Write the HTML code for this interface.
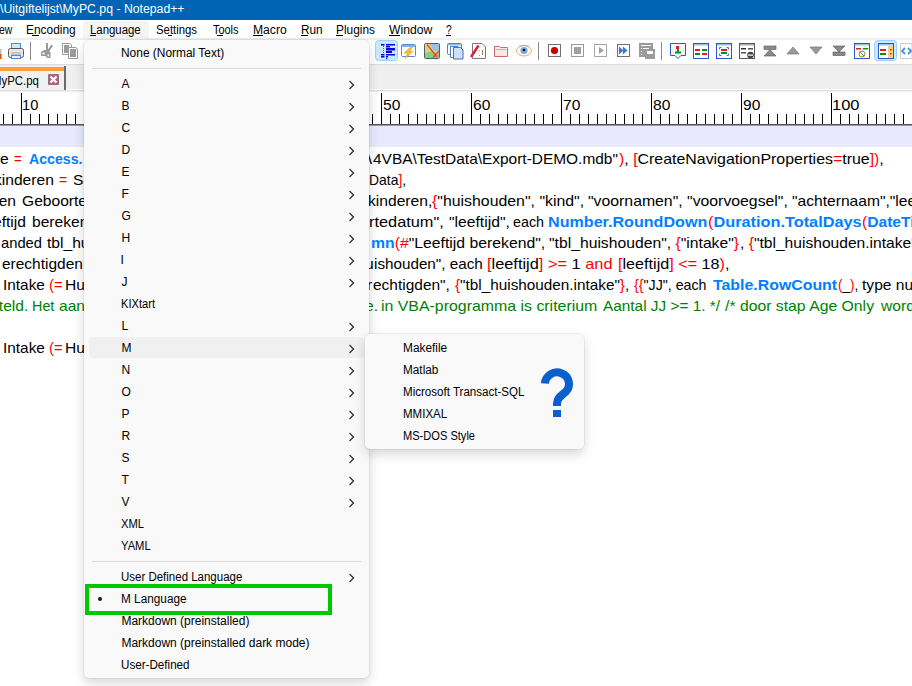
<!DOCTYPE html>
<html><head><meta charset="utf-8"><style>
html,body{margin:0;padding:0;}
body{width:912px;height:686px;overflow:hidden;position:relative;background:#fff;font-family:"Liberation Sans",sans-serif;}
.t{position:absolute;white-space:pre;line-height:1;transform-origin:0 0;font-family:"Liberation Sans",sans-serif;}
.a{position:absolute;}
.tick{position:absolute;width:1px;background:#000;}
</style></head><body>
<!-- title bar -->
<div class="a" style="left:0;top:0;width:912px;height:20px;background:#0064b4"></div>
<!-- menubar -->
<div class="a" style="left:0;top:20px;width:912px;height:18px;background:#fff"></div>
<div class="a" style="left:83px;top:21px;width:66px;height:17px;background:#f5f5f5"></div>
<div class="a" style="left:0;top:38px;width:912px;height:2px;background:#efefef"></div>
<!--UL--><div class="a" style="left:32px;top:35px;width:7px;height:1px;background:#000"></div><div class="a" style="left:90px;top:35px;width:6px;height:1px;background:#000"></div><div class="a" style="left:168px;top:35px;width:4px;height:1px;background:#000"></div><div class="a" style="left:217px;top:35px;width:6px;height:1px;background:#000"></div><div class="a" style="left:253px;top:35px;width:10px;height:1px;background:#000"></div><div class="a" style="left:301px;top:35px;width:7px;height:1px;background:#000"></div><div class="a" style="left:336px;top:35px;width:7px;height:1px;background:#000"></div><div class="a" style="left:389px;top:35px;width:11px;height:1px;background:#000"></div><div class="a" style="left:446px;top:35px;width:5px;height:1px;background:#000"></div>
<!-- toolbar -->
<div class="a" style="left:0;top:40px;width:912px;height:24px;background:#fff"></div>
<div class="a" style="left:0;top:64px;width:912px;height:1px;background:#dcdcdc"></div>
<svg class="a" style="left:0;top:0" width="912" height="64" viewBox="0 0 912 64">
<!-- partial icon at left edge -->
<rect x="0" y="49" width="1.5" height="5" fill="#bbb"/><rect x="0" y="54" width="1.5" height="5" fill="#d84a10"/>
<!-- printer -->
<rect x="11.5" y="43.5" width="9" height="8" fill="#d6e8fb" stroke="#4a8ad8" stroke-width="1"/>
<rect x="8.5" y="48.5" width="15" height="9" rx="2" fill="#e8e8e8" stroke="#555" stroke-width="1"/>
<rect x="11" y="52" width="10" height="3" fill="#c8c8c8"/>
<rect x="11.5" y="55.5" width="9" height="3" fill="#e9f3fb" stroke="#4a8ad8" stroke-width="1"/>
<!-- separator -->
<rect x="30" y="42" width="1" height="18" fill="#8a8a8a"/>
<!-- scissors -->
<g fill="#9a9a9a">
<rect x="46" y="43" width="2" height="9"/>
<path d="M51.5 44.5L53 46L48 53L46.5 51.5Z"/>
<path d="M41 52L44 50H48.5L50.5 52.5V58H47L45.5 56H41Z"/>
</g>
<rect x="42.5" y="52.5" width="2" height="2" fill="#fff"/>
<rect x="47.5" y="54.5" width="1.5" height="2" fill="#fff"/>
<!-- copy -->
<path d="M62.5 43.5H70L71.5 45V54.5H62.5Z" fill="#fff" stroke="#9a9a9a"/>
<rect x="64" y="45" width="5" height="8" fill="#9a9a9a"/>
<path d="M68.5 47.5H76L77.5 49V58.5H68.5Z" fill="#fff" stroke="#9a9a9a"/>
<rect x="70" y="49" width="6" height="8" fill="#9a9a9a"/>

<!-- highlighted button 1 -->
<rect x="375.5" y="40.5" width="22" height="20" rx="3" fill="#cce8ff" stroke="#99d1ff"/>
<g fill="#0000e0">
<rect x="381" y="44" width="3.5" height="1.5"/><rect x="386" y="44" width="9" height="1.5"/>
<rect x="386" y="46" width="4" height="1.5"/>
<rect x="386" y="48" width="9" height="2.5"/>
<rect x="386" y="51" width="6" height="2"/>
<rect x="381" y="54" width="3.5" height="1.5"/><rect x="386" y="54" width="9" height="1.5"/>
<rect x="381" y="56" width="3.5" height="1.5"/><rect x="386" y="56" width="2" height="1.5"/>
<rect x="386" y="58" width="1.2" height="1.2"/>
</g>
<g fill="#ff2020"><rect x="383" y="46" width="1" height="1"/><rect x="383" y="48" width="1" height="1"/><rect x="383" y="50" width="1" height="1"/><rect x="383" y="52" width="1" height="1"/></g>
<!-- lightning window -->
<rect x="401.5" y="44.5" width="14" height="12" rx="1" fill="#fff" stroke="#5a88cc"/>
<rect x="402" y="45" width="13" height="2" fill="#8ab0e0"/>
<path d="M410 47.5L404 53H407.5L405 58.5L413 51.5H409.5L412.5 47.5Z" fill="#f0c040" stroke="#d8a020" stroke-width="0.6"/>
<!-- map -->
<rect x="424.5" y="43.5" width="15" height="15" rx="1" fill="#dcd870" stroke="#5a5a78"/>
<path d="M430 44H439V52L433 50Z" fill="#98c0e8"/>
<path d="M425 53L432 51L439 54V58H425Z" fill="#80d080"/>
<path d="M427 44.5L437 57M433 57.5L439 51" stroke="#f04040" stroke-width="1.3"/>
<!-- docs -->
<rect x="447.5" y="43.5" width="14" height="11" rx="1" fill="#fff" stroke="#4a80d8"/>
<rect x="448" y="44" width="13" height="1.5" fill="#90b8ec"/>
<path d="M450.5 46.5H458L460 48.5V57.5H450.5Z" fill="#fff" stroke="#4a80d8"/>
<path d="M453.5 47.5H460.5L463 50V59H453.5Z" fill="#cfe0f8" stroke="#3a70d0"/>
<!-- function doc -->
<path d="M472.5 43.5H482L485.5 47V58.5H472.5Z" fill="#fffdf5" stroke="#7a7a7a"/>
<path d="M471 57L478.5 45.5" stroke="#e02030" stroke-width="2.5"/>
<rect x="479" y="50" width="1" height="1" fill="#7c7"/><rect x="479" y="55" width="1" height="1" fill="#7c7"/><rect x="482" y="50" width="1" height="5" fill="#888"/>
<!-- folder -->
<path d="M494.5 46.5H499.5L500.5 47.5H507.5V56.5H494.5Z" fill="#fbe8e8" stroke="#d06868"/>
<rect x="496" y="49" width="10" height="1" fill="#e8a0a0"/>
<!-- eye -->
<ellipse cx="524" cy="50.8" rx="7.5" ry="5.2" fill="#fffaf0" stroke="#e8a060" stroke-width="0.9"/>
<circle cx="524" cy="50.5" r="3.6" fill="#7aa8e0"/>
<circle cx="524" cy="50" r="1.3" fill="#111"/>
<path d="M519 46.5Q524 44 529 46.5" stroke="#aaa" fill="none"/>
<!-- separator -->
<rect x="538" y="42" width="1" height="18" fill="#8a8a8a"/>
<!-- record -->
<rect x="548.5" y="44.5" width="12" height="12" fill="#fff" stroke="#707070"/>
<circle cx="554.5" cy="50.5" r="3.6" fill="#cc0000"/>
<!-- stop -->
<rect x="571.5" y="44.5" width="12" height="12" fill="#fff" stroke="#9a9a9a"/>
<rect x="574" y="47" width="7" height="7" fill="#a0a0a0"/>
<!-- play -->
<rect x="594.5" y="44.5" width="12" height="12" fill="#fff" stroke="#a6a6a6"/>
<path d="M599 47L604 50.5L599 54Z" fill="#a0a0a0"/>
<!-- ff -->
<rect x="617.5" y="44.5" width="12" height="12" fill="#fff" stroke="#707070"/>
<path d="M619 46.5L623.5 50.5L619 54.5ZM623 46.5L627.5 50.5L623 54.5Z" fill="#3a78e0"/>
<!-- save macro -->
<rect x="639" y="43" width="14" height="14" fill="#9a9a9a"/>
<rect x="645" y="49" width="10" height="10" fill="#9a9a9a"/>
<g fill="#fff"><rect x="641" y="45" width="10" height="1"/><rect x="641" y="48" width="1" height="1"/><rect x="643" y="48" width="6" height="1"/><rect x="641" y="51" width="1" height="1"/><rect x="641" y="54" width="1" height="1"/><rect x="647" y="51" width="6" height="3"/></g>
<!-- separator -->
<rect x="661" y="42" width="1" height="18" fill="#8a8a8a"/>
<!-- bubble -->
<path d="M670.5 43.5H685.5V55.5H681L678 58.5L675 55.5H670.5Z" fill="#f4f6fb" stroke="#2a58c8"/>
<rect x="676" y="46" width="3" height="3" fill="#e02020"/><rect x="677" y="49" width="2" height="3" fill="#109010"/><rect x="675" y="51.5" width="6" height="2" fill="#109010"/>
<!-- dash box -->
<rect x="693.5" y="43.5" width="15" height="15" fill="#fff" stroke="#2a58c8"/>
<rect x="694" y="44" width="14" height="1.5" fill="#9cc0f0"/>
<rect x="695" y="49" width="5" height="2" fill="#e02020"/><rect x="702" y="49" width="5" height="2" fill="#109010"/>
<rect x="695" y="53" width="5" height="2" fill="#109010"/><rect x="702" y="53" width="5" height="2" fill="#e02020"/>
<!-- bracket box -->
<rect x="716.5" y="43.5" width="15" height="15" fill="#fff" stroke="#2a58c8"/>
<rect x="717" y="44" width="14" height="1.5" fill="#9cc0f0"/>
<rect x="721" y="49" width="6" height="2" fill="#e02020"/><rect x="721" y="52" width="6" height="2" fill="#109010"/>
<path d="M719.5 49.5V47.5H721.5M726.5 47.5H728.5V49.5M719.5 53.5V55.5H721.5M726.5 55.5H728.5V53.5" stroke="#6a6aa0" fill="none"/>
<!-- gray box -->
<rect x="739.5" y="43.5" width="15" height="15" fill="#fff" stroke="#555"/>
<rect x="740" y="44" width="14" height="1.5" fill="#aaa"/>
<rect x="741" y="48" width="5" height="1.5" fill="#333"/><rect x="748" y="48" width="5" height="1.5" fill="#555"/>
<rect x="741" y="52" width="5" height="1.5" fill="#555"/>
<circle cx="750.5" cy="55" r="3.3" fill="#444"/><rect x="748" y="54.5" width="5" height="1.2" fill="#fff"/>
<!-- hourglass top -->
<rect x="764" y="46" width="12" height="3.5" fill="#8a8a8a" stroke="#555" stroke-width="0.6"/>
<path d="M770 49.5L764 56H776Z" fill="#8a8a8a" stroke="#555" stroke-width="0.6"/>
<!-- up tri -->
<path d="M793 47L787 54H799Z" fill="#9a9a9a" stroke="#666" stroke-width="0.6"/>
<!-- down tri -->
<path d="M810 47H822L816 54Z" fill="#9a9a9a" stroke="#666" stroke-width="0.6"/>
<!-- hourglass bottom -->
<path d="M833 46H845L839 52Z" fill="#8a8a8a" stroke="#555" stroke-width="0.6"/>
<rect x="833" y="52" width="12" height="3.5" fill="#8a8a8a" stroke="#555" stroke-width="0.6"/>
<!-- blue box no -->
<rect x="854.5" y="43.5" width="15" height="15" fill="#fff" stroke="#2a58c8"/>
<rect x="855" y="44" width="14" height="1.5" fill="#9cc0f0"/>
<rect x="856" y="48" width="5" height="1.5" fill="#e02020"/><rect x="863" y="48" width="5" height="1.5" fill="#109010"/>
<circle cx="862" cy="54" r="3" fill="none" stroke="#8a8a40" stroke-width="1"/><path d="M860 52L864 56" stroke="#8a8a40"/>
<!-- highlighted button 2 -->
<rect x="874.5" y="40.5" width="22" height="20" rx="3" fill="#cce8ff" stroke="#99d1ff"/>
<rect x="878.5" y="43.5" width="15" height="15" fill="#fff" stroke="#2a58c8"/>
<rect x="879" y="44" width="14" height="1.5" fill="#9cc0f0"/>
<rect x="888" y="46" width="5" height="12" fill="#f8d080"/>
<rect x="880" y="49" width="6" height="2" fill="#e02020"/><rect x="880" y="53" width="6" height="2" fill="#109010"/>
<rect x="890" y="49" width="1.5" height="1.5" fill="#e02020"/><rect x="890" y="53" width="1.5" height="1.5" fill="#e02020"/>
<!-- partial <> -->
<path d="M900.5 43.5H912V58.5H900.5Z" fill="#fff" stroke="#ccc"/>
<path d="M905 48L902 51L905 54M908 48L911 51L908 54" stroke="#4a90e0" stroke-width="1.8" fill="none"/>
</svg>

<!-- tab bar -->
<div class="a" style="left:0;top:65px;width:912px;height:24px;background:#efefef"></div>
<div class="a" style="left:0;top:89px;width:912px;height:1px;background:#fff"></div>
<div class="a" style="left:0;top:90px;width:912px;height:1px;background:#e0e0e0"></div>
<div class="a" style="left:0;top:91px;width:912px;height:1px;background:#efefef"></div>
<div class="a" style="left:0;top:67px;width:64px;height:4px;background:#f8a033"></div>
<div class="a" style="left:0;top:71px;width:64px;height:19px;background:#f0f0f0"></div>
<div class="a" style="left:64px;top:66px;width:2px;height:24px;background:#6b6b6b"></div>
<div class="a" style="left:48px;top:74px;width:11px;height:11px;background:#aa6680;border-radius:1px"></div>
<svg class="a" style="left:48px;top:74px" width="11" height="11"><path d="M2.5 2.5L8.5 8.5M8.5 2.5L2.5 8.5" stroke="#fff" stroke-width="2.3"/></svg>
<!-- ruler -->
<div class="a" style="left:0;top:92px;width:912px;height:32px;background:#fff"></div>
<div class="a" style="left:0;top:124px;width:912px;height:1px;background:#555"></div>
<div class="a" style="left:0;top:125px;width:912px;height:1px;background:#999"></div>
<div class="tick" style="left:3px;top:114px;height:10px"></div>
<div class="tick" style="left:12px;top:114px;height:10px"></div>
<div class="tick" style="left:21px;top:93px;height:31px"></div>
<div class="tick" style="left:30px;top:114px;height:10px"></div>
<div class="tick" style="left:39px;top:114px;height:10px"></div>
<div class="tick" style="left:48px;top:114px;height:10px"></div>
<div class="tick" style="left:57px;top:114px;height:10px"></div>
<div class="tick" style="left:66px;top:114px;height:10px"></div>
<div class="tick" style="left:75px;top:114px;height:10px"></div>
<div class="tick" style="left:84px;top:114px;height:10px"></div>
<div class="tick" style="left:93px;top:114px;height:10px"></div>
<div class="tick" style="left:102px;top:114px;height:10px"></div>
<div class="tick" style="left:111px;top:93px;height:31px"></div>
<div class="tick" style="left:120px;top:114px;height:10px"></div>
<div class="tick" style="left:129px;top:114px;height:10px"></div>
<div class="tick" style="left:138px;top:114px;height:10px"></div>
<div class="tick" style="left:147px;top:114px;height:10px"></div>
<div class="tick" style="left:156px;top:114px;height:10px"></div>
<div class="tick" style="left:165px;top:114px;height:10px"></div>
<div class="tick" style="left:174px;top:114px;height:10px"></div>
<div class="tick" style="left:183px;top:114px;height:10px"></div>
<div class="tick" style="left:192px;top:114px;height:10px"></div>
<div class="tick" style="left:201px;top:93px;height:31px"></div>
<div class="tick" style="left:210px;top:114px;height:10px"></div>
<div class="tick" style="left:219px;top:114px;height:10px"></div>
<div class="tick" style="left:228px;top:114px;height:10px"></div>
<div class="tick" style="left:237px;top:114px;height:10px"></div>
<div class="tick" style="left:246px;top:114px;height:10px"></div>
<div class="tick" style="left:255px;top:114px;height:10px"></div>
<div class="tick" style="left:264px;top:114px;height:10px"></div>
<div class="tick" style="left:273px;top:114px;height:10px"></div>
<div class="tick" style="left:282px;top:114px;height:10px"></div>
<div class="tick" style="left:291px;top:93px;height:31px"></div>
<div class="tick" style="left:300px;top:114px;height:10px"></div>
<div class="tick" style="left:309px;top:114px;height:10px"></div>
<div class="tick" style="left:318px;top:114px;height:10px"></div>
<div class="tick" style="left:327px;top:114px;height:10px"></div>
<div class="tick" style="left:336px;top:114px;height:10px"></div>
<div class="tick" style="left:345px;top:114px;height:10px"></div>
<div class="tick" style="left:354px;top:114px;height:10px"></div>
<div class="tick" style="left:363px;top:114px;height:10px"></div>
<div class="tick" style="left:372px;top:114px;height:10px"></div>
<div class="tick" style="left:381px;top:93px;height:31px"></div>
<div class="tick" style="left:390px;top:114px;height:10px"></div>
<div class="tick" style="left:399px;top:114px;height:10px"></div>
<div class="tick" style="left:408px;top:114px;height:10px"></div>
<div class="tick" style="left:417px;top:114px;height:10px"></div>
<div class="tick" style="left:426px;top:114px;height:10px"></div>
<div class="tick" style="left:435px;top:114px;height:10px"></div>
<div class="tick" style="left:444px;top:114px;height:10px"></div>
<div class="tick" style="left:453px;top:114px;height:10px"></div>
<div class="tick" style="left:462px;top:114px;height:10px"></div>
<div class="tick" style="left:471px;top:93px;height:31px"></div>
<div class="tick" style="left:480px;top:114px;height:10px"></div>
<div class="tick" style="left:489px;top:114px;height:10px"></div>
<div class="tick" style="left:498px;top:114px;height:10px"></div>
<div class="tick" style="left:507px;top:114px;height:10px"></div>
<div class="tick" style="left:516px;top:114px;height:10px"></div>
<div class="tick" style="left:525px;top:114px;height:10px"></div>
<div class="tick" style="left:534px;top:114px;height:10px"></div>
<div class="tick" style="left:543px;top:114px;height:10px"></div>
<div class="tick" style="left:552px;top:114px;height:10px"></div>
<div class="tick" style="left:561px;top:93px;height:31px"></div>
<div class="tick" style="left:570px;top:114px;height:10px"></div>
<div class="tick" style="left:579px;top:114px;height:10px"></div>
<div class="tick" style="left:588px;top:114px;height:10px"></div>
<div class="tick" style="left:597px;top:114px;height:10px"></div>
<div class="tick" style="left:606px;top:114px;height:10px"></div>
<div class="tick" style="left:615px;top:114px;height:10px"></div>
<div class="tick" style="left:624px;top:114px;height:10px"></div>
<div class="tick" style="left:633px;top:114px;height:10px"></div>
<div class="tick" style="left:642px;top:114px;height:10px"></div>
<div class="tick" style="left:651px;top:93px;height:31px"></div>
<div class="tick" style="left:660px;top:114px;height:10px"></div>
<div class="tick" style="left:669px;top:114px;height:10px"></div>
<div class="tick" style="left:678px;top:114px;height:10px"></div>
<div class="tick" style="left:687px;top:114px;height:10px"></div>
<div class="tick" style="left:696px;top:114px;height:10px"></div>
<div class="tick" style="left:705px;top:114px;height:10px"></div>
<div class="tick" style="left:714px;top:114px;height:10px"></div>
<div class="tick" style="left:723px;top:114px;height:10px"></div>
<div class="tick" style="left:732px;top:114px;height:10px"></div>
<div class="tick" style="left:741px;top:93px;height:31px"></div>
<div class="tick" style="left:750px;top:114px;height:10px"></div>
<div class="tick" style="left:759px;top:114px;height:10px"></div>
<div class="tick" style="left:768px;top:114px;height:10px"></div>
<div class="tick" style="left:777px;top:114px;height:10px"></div>
<div class="tick" style="left:786px;top:114px;height:10px"></div>
<div class="tick" style="left:795px;top:114px;height:10px"></div>
<div class="tick" style="left:804px;top:114px;height:10px"></div>
<div class="tick" style="left:813px;top:114px;height:10px"></div>
<div class="tick" style="left:822px;top:114px;height:10px"></div>
<div class="tick" style="left:831px;top:93px;height:31px"></div>
<div class="tick" style="left:840px;top:114px;height:10px"></div>
<div class="tick" style="left:849px;top:114px;height:10px"></div>
<div class="tick" style="left:858px;top:114px;height:10px"></div>
<div class="tick" style="left:867px;top:114px;height:10px"></div>
<div class="tick" style="left:876px;top:114px;height:10px"></div>
<div class="tick" style="left:885px;top:114px;height:10px"></div>
<div class="tick" style="left:894px;top:114px;height:10px"></div>
<div class="tick" style="left:903px;top:114px;height:10px"></div>
<div class="tick" style="left:912px;top:114px;height:10px"></div>
<!-- editor -->
<div class="a" style="left:0;top:126px;width:912px;height:21px;background:#e8e8ff"></div>
<div class="t" style="left:-0.50px;top:3px;font-size:12px;transform:scaleX(1.0208);"><span style="color:#fff;font-weight:400">\Uitgiftelijst\MyPC.pq - Notepad++</span></div>
<div class="t" style="left:-1.00px;top:24px;font-size:12px;transform:scaleX(0.8613);">ew</div>
<div class="t" style="left:26.00px;top:24px;font-size:12px;transform:scaleX(0.9926);">Encoding</div>
<div class="t" style="left:90.00px;top:24px;font-size:12px;transform:scaleX(0.9494);">Language</div>
<div class="t" style="left:156.00px;top:24px;font-size:12px;transform:scaleX(0.9456);">Settings</div>
<div class="t" style="left:213.00px;top:24px;font-size:12px;transform:scaleX(0.9103);">Tools</div>
<div class="t" style="left:253.00px;top:24px;font-size:12px;transform:scaleX(1.0099);">Macro</div>
<div class="t" style="left:301.00px;top:24px;font-size:12px;transform:scaleX(0.9841);">Run</div>
<div class="t" style="left:336.00px;top:24px;font-size:12px;transform:scaleX(0.9909);">Plugins</div>
<div class="t" style="left:389.00px;top:24px;font-size:12px;transform:scaleX(1.0136);">Window</div>
<div class="t" style="left:446.00px;top:24px;font-size:12px;transform:scaleX(0.8571);">?</div>
<div class="t" style="left:-7.74px;top:75px;font-size:12px;transform:scaleX(0.9500);">MyPC.pq</div>
<div class="t" style="left:22.02px;top:97px;font-size:15px;transform:scaleX(0.9777);">10</div>
<div class="t" style="left:383.00px;top:97px;font-size:15px;transform:scaleX(1.0402);">50</div>
<div class="t" style="left:473.00px;top:97px;font-size:15px;transform:scaleX(1.0402);">60</div>
<div class="t" style="left:563.00px;top:97px;font-size:15px;transform:scaleX(1.0402);">70</div>
<div class="t" style="left:653.00px;top:97px;font-size:15px;transform:scaleX(1.0402);">80</div>
<div class="t" style="left:743.00px;top:97px;font-size:15px;transform:scaleX(1.0402);">90</div>
<div class="t" style="left:831.90px;top:97px;font-size:15px;transform:scaleX(1.0978);">100</div>
<div class="t" style="left:-12.91px;top:151px;font-size:15px;transform:scaleX(1.0400);">rce</div>
<div class="t" style="left:14.30px;top:151px;font-size:15px;transform:scaleX(0.8778);"><span style="color:#ff0000;font-weight:400">=</span></div>
<div class="t" style="left:28.60px;top:151px;font-size:15px;transform:scaleX(0.9444);"><span style="color:#0080ff;font-weight:700">Access.</span></div>
<div class="t" style="left:88.96px;top:151px;font-size:15px;transform:scaleX(1.0400);"><span style="color:#0080ff;font-weight:700">Database</span></div>
<div class="t" style="left:-6.18px;top:172px;font-size:15px;transform:scaleX(1.0400);">kinderen</div>
<div class="t" style="left:59.20px;top:172px;font-size:15px;transform:scaleX(0.9333);"><span style="color:#ff0000;font-weight:400">=</span></div>
<div class="t" style="left:73.00px;top:172px;font-size:15px;transform:scaleX(1.0400);">Source</div>
<div class="t" style="left:-9.87px;top:193px;font-size:15px;transform:scaleX(1.0400);">den</div>
<div class="t" style="left:21.90px;top:193px;font-size:15px;transform:scaleX(1.0400);">Geboortedatum</div>
<div class="t" style="left:-7.40px;top:214px;font-size:15px;transform:scaleX(1.0400);">eftijd</div>
<div class="t" style="left:32.00px;top:214px;font-size:15px;transform:scaleX(1.0400);">berekend</div>
<div class="t" style="left:0.80px;top:235px;font-size:15px;transform:scaleX(0.9838);">anded</div>
<div class="t" style="left:47.20px;top:235px;font-size:15px;transform:scaleX(1.0400);">tbl_huishouden</div>
<div class="t" style="left:1.50px;top:256px;font-size:15px;transform:scaleX(1.0314);">erechtigden</div>
<div class="t" style="left:2.88px;top:277px;font-size:15px;transform:scaleX(1.0248);">Intake</div>
<div class="t" style="left:49.40px;top:277px;font-size:15px;transform:scaleX(0.9861);"><span style="color:#ff0000;font-weight:400">(=</span></div>
<div class="t" style="left:64.96px;top:277px;font-size:15px;transform:scaleX(1.0400);">Huishouden</div>
<div class="t" style="left:2.88px;top:340px;font-size:15px;transform:scaleX(1.0248);">Intake</div>
<div class="t" style="left:49.40px;top:340px;font-size:15px;transform:scaleX(0.9861);"><span style="color:#ff0000;font-weight:400">(=</span></div>
<div class="t" style="left:64.96px;top:340px;font-size:15px;transform:scaleX(1.0400);">Huishouden</div>
<div class="t" style="left:-9.37px;top:298px;font-size:15px;transform:scaleX(1.0400);"><span style="color:#008000;font-weight:400">steld.</span></div>
<div class="t" style="left:31.64px;top:298px;font-size:15px;transform:scaleX(0.9579);"><span style="color:#008000;font-weight:400">Het</span></div>
<div class="t" style="left:59.20px;top:298px;font-size:15px;transform:scaleX(1.0400);"><span style="color:#008000;font-weight:400">aantal</span></div>
<div class="t" style="left:367.00px;top:151px;font-size:15px;transform:scaleX(1.2000);">\</div>
<div class="t" style="left:373.40px;top:151px;font-size:15px;transform:scaleX(1.0295);">4VBA\TestData\Export-DEMO.mdb"</div>
<div class="t" style="left:618.50px;top:151px;font-size:15px;transform:scaleX(1.0602);"><span style="color:#ff0000;font-weight:400">)</span>, <span style="color:#ff0000;font-weight:400">[</span>CreateNavigationProperties<span style="color:#ff0000;font-weight:400">=</span>true<span style="color:#ff0000;font-weight:400">])</span>,</div>
<div class="t" style="left:369.47px;top:172px;font-size:15px;transform:scaleX(0.9273);">Data<span style="color:#ff0000;font-weight:400">]</span>,</div>
<div class="t" style="left:368.46px;top:193px;font-size:15px;transform:scaleX(1.0413);">kinderen,</div>
<div class="t" style="left:431.80px;top:193px;font-size:15px;transform:scaleX(1.0572);"><span style="color:#ff0000;font-weight:400">{</span>"huishouden", "kind",</div>
<div class="t" style="left:588.00px;top:193px;font-size:15px;transform:scaleX(1.0533);">"voornamen", "voorvoegsel",</div>
<div class="t" style="left:792.00px;top:193px;font-size:15px;transform:scaleX(1.0400);">"achternaam","leeftijd"</div>
<div class="t" style="left:368.51px;top:214px;font-size:15px;transform:scaleX(1.0884);">rtedatum",</div>
<div class="t" style="left:448.60px;top:214px;font-size:15px;transform:scaleX(1.0455);">"leeftijd",</div>
<div class="t" style="left:512.60px;top:214px;font-size:15px;transform:scaleX(0.9539);">each</div>
<div class="t" style="left:547.93px;top:214px;font-size:15px;transform:scaleX(1.0737);"><span style="color:#0080ff;font-weight:700">Number.RoundDown</span></div>
<div class="t" style="left:707.50px;top:214px;font-size:15px;transform:scaleX(1.0868);"><span style="color:#ff0000;font-weight:400">(</span><span style="color:#0080ff;font-weight:700">Duration.TotalDays</span></div>
<div class="t" style="left:861.50px;top:214px;font-size:15px;transform:scaleX(1.0400);"><span style="color:#ff0000;font-weight:400">(</span><span style="color:#0080ff;font-weight:700">DateTime</span></div>
<div class="t" style="left:371.00px;top:235px;font-size:15px;transform:scaleX(1.0512);"><span style="color:#0080ff;font-weight:700">mn</span><span style="color:#ff0000;font-weight:400">(#</span>"Leeftijd berekend",</div>
<div class="t" style="left:549.00px;top:235px;font-size:15px;transform:scaleX(1.0473);">"tbl_huishouden", <span style="color:#ff0000;font-weight:400">{</span>"intake"<span style="color:#ff0000;font-weight:400">}</span></div>
<div class="t" style="left:739.96px;top:235px;font-size:15px;transform:scaleX(1.0400);">, <span style="color:#ff0000;font-weight:400">{</span>"tbl_huishouden.intake"</div>
<div class="t" style="left:364.68px;top:256px;font-size:15px;transform:scaleX(1.0400);">u</div>
<div class="t" style="left:373.58px;top:256px;font-size:15px;transform:scaleX(1.0158);">ishouden", each</div>
<div class="t" style="left:486.91px;top:256px;font-size:15px;transform:scaleX(1.0902);"><span style="color:#ff0000;font-weight:400">[</span>leeftijd<span style="color:#ff0000;font-weight:400">]</span> <span style="color:#ff0000;font-weight:400">&gt;=</span> 1 <span style="color:#ff0000;font-weight:400">and</span></div>
<div class="t" style="left:618.32px;top:256px;font-size:15px;transform:scaleX(1.0778);"><span style="color:#ff0000;font-weight:400">[</span>leeftijd<span style="color:#ff0000;font-weight:400">]</span> <span style="color:#ff0000;font-weight:400">&lt;=</span> 18<span style="color:#ff0000;font-weight:400">)</span>,</div>
<div class="t" style="left:366.80px;top:277px;font-size:15px;transform:scaleX(1.0400);">r</div>
<div class="t" style="left:372.80px;top:277px;font-size:15px;transform:scaleX(1.0316);">echtigden",</div>
<div class="t" style="left:454.50px;top:277px;font-size:15px;transform:scaleX(1.0199);"><span style="color:#ff0000;font-weight:400">{</span>"tbl_huishouden.intake"<span style="color:#ff0000;font-weight:400">}</span>,</div>
<div class="t" style="left:634.40px;top:277px;font-size:15px;transform:scaleX(0.9463);"><span style="color:#ff0000;font-weight:400">{{</span>"JJ", each</div>
<div class="t" style="left:712.90px;top:277px;font-size:15px;transform:scaleX(1.0587);"><span style="color:#0080ff;font-weight:700">Table.RowCount</span></div>
<div class="t" style="left:838.00px;top:277px;font-size:15px;transform:scaleX(0.9047);"><span style="color:#ff0000;font-weight:400">(</span>_<span style="color:#ff0000;font-weight:400">)</span>,</div>
<div class="t" style="left:861.80px;top:277px;font-size:15px;transform:scaleX(1.0400);">type number</div>
<div class="t" style="left:365.00px;top:298px;font-size:15px;transform:scaleX(1.0400);"><span style="color:#008000;font-weight:400">e.</span></div>
<div class="t" style="left:381.24px;top:298px;font-size:15px;transform:scaleX(1.0591);"><span style="color:#008000;font-weight:400">in VBA-programma is criterium</span></div>
<div class="t" style="left:602.50px;top:298px;font-size:15px;transform:scaleX(1.0246);"><span style="color:#008000;font-weight:400">Aantal JJ &gt;= 1. */</span></div>
<div class="t" style="left:724.60px;top:298px;font-size:15px;transform:scaleX(1.0512);"><span style="color:#008000;font-weight:400">/* door stap Age Only</span></div>
<div class="t" style="left:881.44px;top:298px;font-size:15px;transform:scaleX(1.0400);"><span style="color:#008000;font-weight:400">wordt</span></div>
<!-- dropdown -->
<div class="a" style="left:84px;top:40px;width:285px;height:638px;background:#f9f9f9;border-radius:5px;box-shadow:0 5px 12px rgba(0,0,0,0.16),0 0 0 1px rgba(0,0,0,0.05)"></div>
<div class="a" style="left:92px;top:68px;width:269px;height:1px;background:#d9d9d9"></div>
<div class="a" style="left:92px;top:561px;width:269px;height:1px;background:#d9d9d9"></div>
<div class="a" style="left:89px;top:337px;width:275px;height:21px;background:#f0f0f0;border-radius:4px"></div>
<svg class="a" style="left:348px;top:80px" width="8" height="10"><path d="M1.5 1L5.5 5L1.5 9" fill="none" stroke="#333" stroke-width="1.3"/></svg>
<svg class="a" style="left:348px;top:102px" width="8" height="10"><path d="M1.5 1L5.5 5L1.5 9" fill="none" stroke="#333" stroke-width="1.3"/></svg>
<svg class="a" style="left:348px;top:124px" width="8" height="10"><path d="M1.5 1L5.5 5L1.5 9" fill="none" stroke="#333" stroke-width="1.3"/></svg>
<svg class="a" style="left:348px;top:146px" width="8" height="10"><path d="M1.5 1L5.5 5L1.5 9" fill="none" stroke="#333" stroke-width="1.3"/></svg>
<svg class="a" style="left:348px;top:168px" width="8" height="10"><path d="M1.5 1L5.5 5L1.5 9" fill="none" stroke="#333" stroke-width="1.3"/></svg>
<svg class="a" style="left:348px;top:190px" width="8" height="10"><path d="M1.5 1L5.5 5L1.5 9" fill="none" stroke="#333" stroke-width="1.3"/></svg>
<svg class="a" style="left:348px;top:212px" width="8" height="10"><path d="M1.5 1L5.5 5L1.5 9" fill="none" stroke="#333" stroke-width="1.3"/></svg>
<svg class="a" style="left:348px;top:234px" width="8" height="10"><path d="M1.5 1L5.5 5L1.5 9" fill="none" stroke="#333" stroke-width="1.3"/></svg>
<svg class="a" style="left:348px;top:256px" width="8" height="10"><path d="M1.5 1L5.5 5L1.5 9" fill="none" stroke="#333" stroke-width="1.3"/></svg>
<svg class="a" style="left:348px;top:278px" width="8" height="10"><path d="M1.5 1L5.5 5L1.5 9" fill="none" stroke="#333" stroke-width="1.3"/></svg>
<svg class="a" style="left:348px;top:322px" width="8" height="10"><path d="M1.5 1L5.5 5L1.5 9" fill="none" stroke="#333" stroke-width="1.3"/></svg>
<svg class="a" style="left:348px;top:344px" width="8" height="10"><path d="M1.5 1L5.5 5L1.5 9" fill="none" stroke="#333" stroke-width="1.3"/></svg>
<svg class="a" style="left:348px;top:366px" width="8" height="10"><path d="M1.5 1L5.5 5L1.5 9" fill="none" stroke="#333" stroke-width="1.3"/></svg>
<svg class="a" style="left:348px;top:388px" width="8" height="10"><path d="M1.5 1L5.5 5L1.5 9" fill="none" stroke="#333" stroke-width="1.3"/></svg>
<svg class="a" style="left:348px;top:410px" width="8" height="10"><path d="M1.5 1L5.5 5L1.5 9" fill="none" stroke="#333" stroke-width="1.3"/></svg>
<svg class="a" style="left:348px;top:432px" width="8" height="10"><path d="M1.5 1L5.5 5L1.5 9" fill="none" stroke="#333" stroke-width="1.3"/></svg>
<svg class="a" style="left:348px;top:454px" width="8" height="10"><path d="M1.5 1L5.5 5L1.5 9" fill="none" stroke="#333" stroke-width="1.3"/></svg>
<svg class="a" style="left:348px;top:476px" width="8" height="10"><path d="M1.5 1L5.5 5L1.5 9" fill="none" stroke="#333" stroke-width="1.3"/></svg>
<svg class="a" style="left:348px;top:498px" width="8" height="10"><path d="M1.5 1L5.5 5L1.5 9" fill="none" stroke="#333" stroke-width="1.3"/></svg>
<svg class="a" style="left:348px;top:573px" width="8" height="10"><path d="M1.5 1L5.5 5L1.5 9" fill="none" stroke="#333" stroke-width="1.3"/></svg>
<div class="t" style="left:121.40px;top:47px;font-size:12px;transform:scaleX(0.9939);">None (Normal Text)</div>
<div class="t" style="left:121.40px;top:78px;font-size:12px;">A</div>
<div class="t" style="left:121.40px;top:100px;font-size:12px;">B</div>
<div class="t" style="left:121.40px;top:122px;font-size:12px;">C</div>
<div class="t" style="left:121.40px;top:144px;font-size:12px;">D</div>
<div class="t" style="left:121.40px;top:166px;font-size:12px;">E</div>
<div class="t" style="left:121.40px;top:188px;font-size:12px;">F</div>
<div class="t" style="left:121.40px;top:210px;font-size:12px;">G</div>
<div class="t" style="left:121.40px;top:232px;font-size:12px;">H</div>
<div class="t" style="left:120.40px;top:254px;font-size:12px;">I</div>
<div class="t" style="left:121.40px;top:276px;font-size:12px;">J</div>
<div class="t" style="left:121.40px;top:298px;font-size:12px;transform:scaleX(0.9265);">KIXtart</div>
<div class="t" style="left:121.40px;top:320px;font-size:12px;">L</div>
<div class="t" style="left:121.40px;top:342px;font-size:12px;">M</div>
<div class="t" style="left:121.40px;top:364px;font-size:12px;">N</div>
<div class="t" style="left:121.40px;top:386px;font-size:12px;">O</div>
<div class="t" style="left:121.40px;top:408px;font-size:12px;">P</div>
<div class="t" style="left:121.40px;top:430px;font-size:12px;">R</div>
<div class="t" style="left:121.40px;top:452px;font-size:12px;">S</div>
<div class="t" style="left:121.40px;top:474px;font-size:12px;">T</div>
<div class="t" style="left:121.40px;top:496px;font-size:12px;">V</div>
<div class="t" style="left:121.40px;top:518px;font-size:12px;transform:scaleX(0.9320);">XML</div>
<div class="t" style="left:121.40px;top:540px;font-size:12px;transform:scaleX(0.9342);">YAML</div>
<div class="t" style="left:121.40px;top:571px;font-size:12px;transform:scaleX(0.9569);">User Defined Language</div>
<div class="t" style="left:121.40px;top:593px;font-size:12px;transform:scaleX(0.9829);">M Language</div>
<div class="t" style="left:121.40px;top:615px;font-size:12px;">Markdown (preinstalled)</div>
<div class="t" style="left:121.40px;top:637px;font-size:12px;">Markdown (preinstalled dark mode)</div>
<div class="t" style="left:121.40px;top:659px;font-size:12px;transform:scaleX(0.9697);">User-Defined</div>
<div class="a" style="left:98px;top:597px;width:4px;height:4px;background:#1a1a1a;border-radius:50%"></div>
<!-- submenu -->
<div class="a" style="left:365px;top:334px;width:219px;height:115px;background:#f9f9f9;border-radius:5px;box-shadow:0 5px 12px rgba(0,0,0,0.16),0 0 0 1px rgba(0,0,0,0.05)"></div>
<div class="t" style="left:402.60px;top:342px;font-size:12px;transform:scaleX(0.9887);">Makefile</div>
<div class="t" style="left:402.60px;top:364px;font-size:12px;transform:scaleX(0.9823);">Matlab</div>
<div class="t" style="left:402.60px;top:386px;font-size:12px;transform:scaleX(0.9638);">Microsoft Transact-SQL</div>
<div class="t" style="left:402.60px;top:408px;font-size:12px;transform:scaleX(0.9604);">MMIXAL</div>
<div class="t" style="left:402.60px;top:430px;font-size:12px;transform:scaleX(0.9229);">MS-DOS Style</div>
<svg class="a" style="left:530px;top:360px" width="55" height="65" viewBox="530 360 55 65"><path d="M545 383.5A12 11.5 0 1 1 566 391.5C561 396 557 398 557 403.5V406" fill="none" stroke="#0a5fce" stroke-width="8"/><rect x="553" y="410" width="8" height="7" fill="#0a5fce"/></svg>
<!-- green box -->
<div class="a" style="left:85px;top:584px;width:239px;height:23px;border:4px solid #00c800"></div>
</body></html>
